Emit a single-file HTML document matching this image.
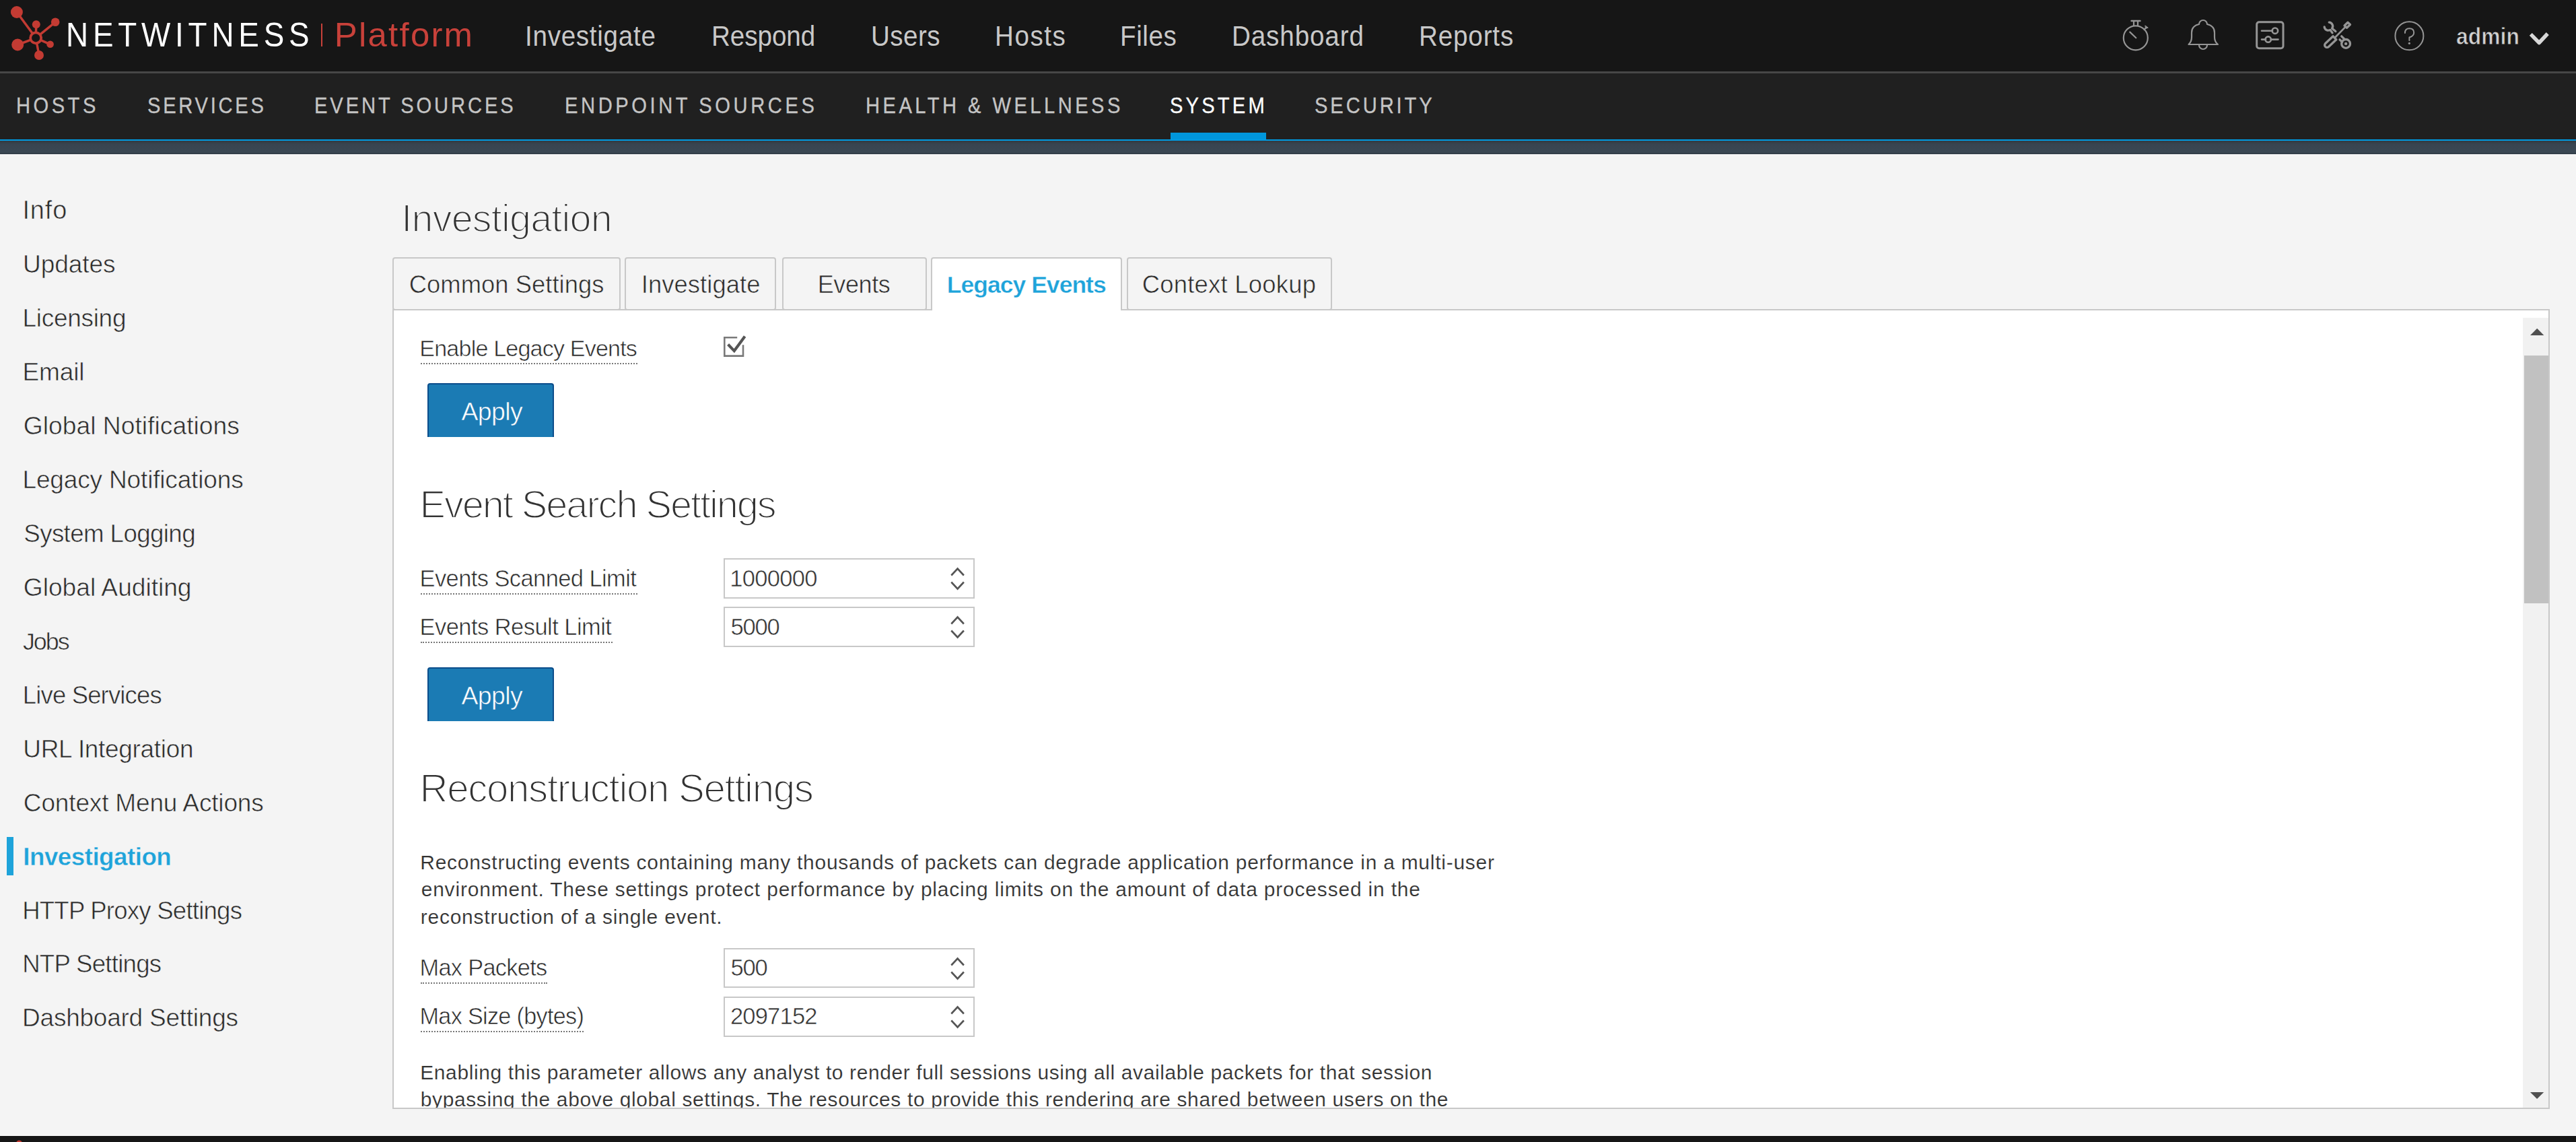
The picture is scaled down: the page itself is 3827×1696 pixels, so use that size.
<!DOCTYPE html>
<html><head><meta charset="utf-8"><title>NetWitness Platform - Investigation</title>
<style>
html,body{margin:0;padding:0;width:3827px;height:1696px;overflow:hidden;background:#f4f4f4;}
body{position:relative;font-family:"Liberation Sans",sans-serif;}
.t{position:absolute;white-space:nowrap;}
.r{position:absolute;}
</style></head><body>
<div class="r" style="left:0px;top:0px;width:3827.00px;height:106.00px;background:#161616"></div>
<div class="r" style="left:0px;top:106px;width:3827.00px;height:3.00px;background:#474747"></div>
<div class="r" style="left:0px;top:109px;width:3827.00px;height:98.00px;background:#202020"></div>
<div class="r" style="left:0px;top:207px;width:3827.00px;height:2.00px;background:#009be3"></div>
<div class="r" style="left:0px;top:209px;width:3827.00px;height:20.00px;background:linear-gradient(#323940,#384450 25%,#3a4753 85%,#303b45)"></div>
<div class="r" style="left:0px;top:229px;width:3827.00px;height:1.00px;background:#fbfbfb"></div>
<div class="r" style="left:0px;top:1686px;width:3827.00px;height:1.00px;background:#ffffff"></div>
<div class="r" style="left:0px;top:1687px;width:3827.00px;height:9.00px;background:#161616"></div>
<svg class="r" style="left:0;top:0" width="100" height="100" viewBox="0 0 100 100">
<g stroke="#c33b33" stroke-width="3.5" fill="none">
<line x1="24.9" y1="18" x2="53.2" y2="56.3"/>
<line x1="82.2" y1="32.8" x2="53.2" y2="56.3"/>
<line x1="53.8" y1="36.3" x2="53.2" y2="56.3"/>
<line x1="26.2" y1="66.5" x2="53.2" y2="56.3"/>
<line x1="74.6" y1="65.8" x2="53.2" y2="56.3"/>
<line x1="58" y1="82" x2="53.2" y2="56.3"/>
</g>
<circle cx="53.2" cy="56.3" r="8" fill="#161616" stroke="#c33b33" stroke-width="3.8"/>
<g fill="#c33b33">
<circle cx="24.9" cy="18" r="9"/>
<circle cx="53.8" cy="36.3" r="6"/>
<circle cx="82.2" cy="32.8" r="6.3"/>
<circle cx="26.2" cy="66.5" r="9"/>
<circle cx="74.6" cy="65.8" r="5.3"/>
<circle cx="58" cy="82" r="7"/>
</g></svg>
<svg class="r" style="left:0;top:1687px" width="60" height="9"><circle cx="28.5" cy="11" r="4.5" fill="#c33b33"/></svg>
<div class="t" style="left:98.32px;top:27.00px;font-size:50.87px;line-height:50.87px;letter-spacing:7.586px;color:#ffffff;transform:scaleX(0.9);transform-origin:0 0;">NETWITNESS</div>
<div class="r" style="left:477px;top:35px;width:2.00px;height:34.00px;background:#c8413a"></div>
<div class="t" style="left:496.83px;top:27.00px;font-size:50.87px;line-height:50.87px;letter-spacing:2.258px;color:#c8413a;">Platform</div>
<div class="t" style="left:780.49px;top:32.00px;font-size:42.88px;line-height:42.88px;letter-spacing:0.805px;color:#c8c8c8;transform:scaleX(0.9);transform-origin:0 0;">Investigate</div>
<div class="t" style="left:1056.99px;top:32.00px;font-size:42.88px;line-height:42.88px;letter-spacing:-0.054px;color:#c8c8c8;transform:scaleX(0.9);transform-origin:0 0;">Respond</div>
<div class="t" style="left:1293.59px;top:32.00px;font-size:42.88px;line-height:42.88px;letter-spacing:0.513px;color:#c8c8c8;transform:scaleX(0.9);transform-origin:0 0;">Users</div>
<div class="t" style="left:1477.99px;top:32.00px;font-size:42.88px;line-height:42.88px;letter-spacing:1.744px;color:#c8c8c8;transform:scaleX(0.9);transform-origin:0 0;">Hosts</div>
<div class="t" style="left:1663.99px;top:32.00px;font-size:42.88px;line-height:42.88px;letter-spacing:0.651px;color:#c8c8c8;transform:scaleX(0.9);transform-origin:0 0;">Files</div>
<div class="t" style="left:1829.99px;top:32.00px;font-size:42.88px;line-height:42.88px;letter-spacing:0.985px;color:#c8c8c8;transform:scaleX(0.9);transform-origin:0 0;">Dashboard</div>
<div class="t" style="left:2107.99px;top:32.00px;font-size:42.88px;line-height:42.88px;letter-spacing:0.944px;color:#c8c8c8;transform:scaleX(0.9);transform-origin:0 0;">Reports</div>
<div class="t" style="left:3648.50px;top:36.00px;font-size:35.25px;line-height:35.25px;letter-spacing:0.110px;color:#d0d0d0;font-weight:bold;-webkit-text-stroke:0.8px #161616;transform:scaleX(0.9);transform-origin:0 0;">admin</div>
<div class="t" style="left:24.12px;top:140.00px;font-size:33.14px;line-height:33.14px;letter-spacing:5.097px;color:#c4c4c4;-webkit-text-stroke:0.35px #c4c4c4;transform:scaleX(0.88);transform-origin:0 0;">HOSTS</div>
<div class="t" style="left:218.99px;top:140.00px;font-size:33.14px;line-height:33.14px;letter-spacing:4.218px;color:#c4c4c4;-webkit-text-stroke:0.35px #c4c4c4;transform:scaleX(0.88);transform-origin:0 0;">SERVICES</div>
<div class="t" style="left:467.32px;top:140.00px;font-size:33.14px;line-height:33.14px;letter-spacing:4.427px;color:#c4c4c4;-webkit-text-stroke:0.35px #c4c4c4;transform:scaleX(0.88);transform-origin:0 0;">EVENT SOURCES</div>
<div class="t" style="left:839.22px;top:140.00px;font-size:33.14px;line-height:33.14px;letter-spacing:5.189px;color:#c4c4c4;-webkit-text-stroke:0.35px #c4c4c4;transform:scaleX(0.88);transform-origin:0 0;">ENDPOINT SOURCES</div>
<div class="t" style="left:1285.72px;top:140.00px;font-size:33.14px;line-height:33.14px;letter-spacing:5.052px;color:#c4c4c4;-webkit-text-stroke:0.35px #c4c4c4;transform:scaleX(0.88);transform-origin:0 0;">HEALTH &amp; WELLNESS</div>
<div class="t" style="left:1738.39px;top:140.00px;font-size:33.14px;line-height:33.14px;letter-spacing:4.742px;color:#ffffff;-webkit-text-stroke:0.35px #ffffff;transform:scaleX(0.88);transform-origin:0 0;">SYSTEM</div>
<div class="t" style="left:1953.09px;top:140.00px;font-size:33.14px;line-height:33.14px;letter-spacing:4.444px;color:#c4c4c4;-webkit-text-stroke:0.35px #c4c4c4;transform:scaleX(0.88);transform-origin:0 0;">SECURITY</div>
<div class="r" style="left:1738.8px;top:197px;width:142.20px;height:10.00px;background:#0096dc"></div>
<svg class="r" style="left:3140px;top:20px" width="680" height="70" viewBox="3140 20 680 70" fill="none" stroke="#959595" stroke-width="2.2" stroke-linecap="round" stroke-linejoin="round">
<circle cx="3172.8" cy="56.3" r="18"/>
<line x1="3166.5" y1="31" x2="3179.5" y2="31" stroke-width="2.4"/>
<line x1="3170" y1="32" x2="3170" y2="38"/><line x1="3176" y1="32" x2="3176" y2="38"/>
<line x1="3164.3" y1="47.6" x2="3173.3" y2="56.3"/>
<line x1="3185.5" y1="44" x2="3188.5" y2="41"/><polygon points="3187.2,38.1 3191.3,41.2 3187.9,42.3" fill="#959595" stroke-width="1"/>
<path d="M3251.5 66 H3295 Q3290 62 3290 55 V48.5 Q3290 38.5 3279 36 A6 6 0 0 0 3267 36 Q3256 38.5 3256 48.5 V55 Q3256 62 3251.5 66 Z"/>
<path d="M3267 67 A5.9 5.9 0 0 0 3279 67"/>
<rect x="3352.7" y="32.7" width="39.3" height="39" rx="3.5" stroke-width="3"/>
<line x1="3360" y1="45.7" x2="3376" y2="45.7" stroke-width="2.6"/>
<circle cx="3379.9" cy="45.7" r="4.2" stroke-width="2.6"/>
<line x1="3360" y1="58.6" x2="3366" y2="58.6" stroke-width="2.6"/>
<line x1="3373.8" y1="58.6" x2="3384.5" y2="58.6" stroke-width="2.6"/>
<circle cx="3369.7" cy="58.6" r="4.2" stroke-width="2.6"/>
<g stroke-width="3.3">
<path d="M3466.1 53.8 L3470.9 58.8 L3459.5 69.5 A3.45 3.45 0 0 1 3454.7 64.5 Z"/>
<path d="M3483 38 L3488 33.3 L3491.5 36.5 L3486.5 41.2 Z"/>
<path d="M3460.2 33.2 A5.8 5.8 0 0 1 3464.6 42.3 L3469.8 46.6"/>
<path d="M3453.2 39.8 A5.8 5.8 0 0 0 3461.8 44.4 L3465 48.8"/>
<line x1="3476" y1="58.8" x2="3479.6" y2="62.4"/>
<line x1="3478.7" y1="53.8" x2="3482.8" y2="57.9"/>
<circle cx="3485.1" cy="64.9" r="6.4"/>
</g>
<line x1="3468.5" y1="56.3" x2="3484.75" y2="39.6" stroke-width="2.7"/>
<circle cx="3485.1" cy="64.9" r="2.2" fill="#959595" stroke="none"/>
<circle cx="3579.4" cy="53.3" r="21" stroke-width="2"/>
<path d="M3572.9 49 Q3572.9 42.2 3579.4 42.2 Q3586.2 42.2 3586.2 48.5 Q3586.2 53.5 3579.4 55.5 V60" stroke-width="2"/>
<circle cx="3579.4" cy="64.3" r="1.6" fill="#959595" stroke="none"/>
<polyline points="3759.8,50.8 3772.2,63.5 3784.8,50" stroke="#d8d8d8" stroke-width="5.5" stroke-linecap="butt"/>
</svg>
<div class="t" style="left:33.43px;top:294.00px;font-size:37.95px;line-height:37.95px;letter-spacing:0.899px;color:#2b2b2b;-webkit-text-stroke:0.6px #f4f4f4;">Info</div>
<div class="t" style="left:34.08px;top:374.00px;font-size:37.11px;line-height:37.11px;letter-spacing:-0.140px;color:#2b2b2b;-webkit-text-stroke:0.6px #f4f4f4;">Updates</div>
<div class="t" style="left:33.51px;top:455.00px;font-size:36.97px;line-height:36.97px;letter-spacing:-0.281px;color:#2b2b2b;-webkit-text-stroke:0.6px #f4f4f4;">Licensing</div>
<div class="t" style="left:33.50px;top:534.00px;font-size:37.07px;line-height:37.07px;letter-spacing:-0.189px;color:#2b2b2b;-webkit-text-stroke:0.6px #f4f4f4;">Email</div>
<div class="t" style="left:34.65px;top:614.00px;font-size:37.24px;line-height:37.24px;letter-spacing:0.027px;color:#2b2b2b;-webkit-text-stroke:0.6px #f4f4f4;">Global Notifications</div>
<div class="t" style="left:33.51px;top:694.00px;font-size:37.05px;line-height:37.05px;letter-spacing:-0.178px;color:#2b2b2b;-webkit-text-stroke:0.6px #f4f4f4;">Legacy Notifications</div>
<div class="t" style="left:35.25px;top:775.00px;font-size:36.73px;line-height:36.73px;letter-spacing:-0.612px;color:#2b2b2b;-webkit-text-stroke:0.6px #f4f4f4;">System Logging</div>
<div class="t" style="left:34.86px;top:854.00px;font-size:37.18px;line-height:37.18px;letter-spacing:-0.031px;color:#2b2b2b;-webkit-text-stroke:0.6px #f4f4f4;">Global Auditing</div>
<div class="t" style="left:33.94px;top:935.00px;font-size:35.92px;line-height:35.92px;letter-spacing:-2.066px;color:#2b2b2b;-webkit-text-stroke:0.6px #f4f4f4;">Jobs</div>
<div class="t" style="left:33.75px;top:1015.00px;font-size:36.48px;line-height:36.48px;letter-spacing:-0.829px;color:#2b2b2b;-webkit-text-stroke:0.6px #f4f4f4;">Live Services</div>
<div class="t" style="left:34.29px;top:1095.00px;font-size:36.95px;line-height:36.95px;letter-spacing:-0.295px;color:#2b2b2b;-webkit-text-stroke:0.6px #f4f4f4;">URL Integration</div>
<div class="t" style="left:34.86px;top:1174.00px;font-size:37.05px;line-height:37.05px;letter-spacing:-0.184px;color:#2b2b2b;-webkit-text-stroke:0.6px #f4f4f4;">Context Menu Actions</div>
<div class="t" style="left:34.30px;top:1255.00px;font-size:36.77px;line-height:36.77px;letter-spacing:-0.523px;color:#1ea3da;font-weight:bold;-webkit-text-stroke:0.4px #f4f4f4;">Investigation</div>
<div class="t" style="left:33.14px;top:1335.00px;font-size:36.57px;line-height:36.57px;letter-spacing:-0.771px;color:#2b2b2b;-webkit-text-stroke:0.6px #f4f4f4;">HTTP Proxy Settings</div>
<div class="t" style="left:33.14px;top:1414.00px;font-size:36.62px;line-height:36.62px;letter-spacing:-0.728px;color:#2b2b2b;-webkit-text-stroke:0.6px #f4f4f4;">NTP Settings</div>
<div class="t" style="left:33.11px;top:1493.00px;font-size:37.01px;line-height:37.01px;letter-spacing:-0.241px;color:#2b2b2b;-webkit-text-stroke:0.6px #f4f4f4;">Dashboard Settings</div>
<div class="r" style="left:10px;top:1243px;width:10.00px;height:57.00px;background:#1ea3da"></div>
<div class="t" style="left:596.31px;top:296.00px;font-size:57.43px;line-height:57.43px;letter-spacing:-0.754px;color:#333333;-webkit-text-stroke:2px #f4f4f4;">Investigation</div>
<div class="r" style="left:583.3px;top:459px;width:3204.70px;height:1187.60px;box-sizing:border-box;border:2px solid #c8c8c8;background:#fff"></div>
<div class="r" style="left:583.3px;top:382px;width:338.40px;height:79.40px;box-sizing:border-box;border:2px solid #c8c8c8;border-radius:4px;background:#f4f4f4"></div>
<div class="t" style="left:607.80px;top:405.00px;font-size:36.37px;line-height:36.37px;letter-spacing:0.047px;color:#2b2b2b;-webkit-text-stroke:0.6px #f4f4f4;">Common Settings</div>
<div class="r" style="left:928.1px;top:382px;width:224.90px;height:79.40px;box-sizing:border-box;border:2px solid #c8c8c8;border-radius:4px;background:#f4f4f4"></div>
<div class="t" style="left:952.76px;top:405.00px;font-size:36.40px;line-height:36.40px;letter-spacing:0.068px;color:#2b2b2b;-webkit-text-stroke:0.6px #f4f4f4;">Investigate</div>
<div class="r" style="left:1161.5px;top:382px;width:215.50px;height:79.40px;box-sizing:border-box;border:2px solid #c8c8c8;border-radius:4px;background:#f4f4f4"></div>
<div class="t" style="left:1214.79px;top:405.00px;font-size:36.02px;line-height:36.02px;letter-spacing:-0.436px;color:#2b2b2b;-webkit-text-stroke:0.6px #f4f4f4;">Events</div>
<div class="r" style="left:1383.4px;top:382px;width:283.60px;height:79.20px;box-sizing:border-box;border:2px solid #c8c8c8;border-bottom:none;border-radius:4px 4px 0 0;background:#fff"></div>
<div class="t" style="left:1406.78px;top:406.00px;font-size:35.58px;line-height:35.58px;letter-spacing:-1.017px;color:#1ea3da;font-weight:bold;-webkit-text-stroke:0.4px #fff;">Legacy Events</div>
<div class="r" style="left:1673.7px;top:382px;width:305.50px;height:79.40px;box-sizing:border-box;border:2px solid #c8c8c8;border-radius:4px;background:#f4f4f4"></div>
<div class="t" style="left:1696.69px;top:405.00px;font-size:36.50px;line-height:36.50px;letter-spacing:0.201px;color:#2b2b2b;-webkit-text-stroke:0.6px #f4f4f4;">Context Lookup</div>
<div class="r" style="left:3748px;top:472px;width:38.00px;height:1173.00px;background:#f1f1f1"></div>
<div class="r" style="left:3750px;top:528px;width:36.00px;height:368.30px;background:#c1c1c1"></div>
<svg class="r" style="left:3748px;top:472px" width="38" height="1173" viewBox="3748 472 38 1173"><polygon points="3759,498 3779.4,498 3769.2,487.8" fill="#505050"/><polygon points="3759,1622 3779.2,1622 3769.1,1632" fill="#505050"/></svg>
<div class="r" style="left:585px;top:461px;width:3163px;height:1184px;overflow:hidden">
<div class="t" style="left:38.34px;top:39.00px;font-size:34.06px;line-height:34.06px;letter-spacing:-0.804px;color:#2b2b2b;-webkit-text-stroke:0.6px #fff;">Enable Legacy Events</div>
<div class="r" style="left:40px;top:78px;width:321.90px;height:2.00px;border-top:2px dotted #777;height:0"></div>
<svg class="r" style="left:485px;top:33px" width="42" height="42" viewBox="1070 494 42 42" fill="none">
<path d="M1095.2 501.3 H1076.3 V528.6 H1104 V512.3" stroke="#7a7a7a" stroke-width="2.6"/>
<polyline points="1081.6,511.5 1090.8,521.1 1106.6,499.6" stroke="#555" stroke-width="4.2"/>
</svg>
<div class="r" style="left:50px;top:108px;width:188.00px;height:80.00px;box-sizing:border-box;background:#1b7bb4;border:2px solid #0b4d8b;border-bottom:none;border-radius:4px 4px 0 0"></div>
<div class="t" style="left:100.40px;top:132.00px;font-size:37.42px;line-height:37.42px;letter-spacing:-0.548px;color:#ffffff;-webkit-text-stroke:0.6px #1b7bb4;">Apply</div>
<div class="t" style="left:38.49px;top:260.00px;font-size:57.78px;line-height:57.78px;letter-spacing:-2.069px;color:#333333;-webkit-text-stroke:2px #fff;">Event Search Settings</div>
<div class="t" style="left:38.51px;top:381.00px;font-size:34.47px;line-height:34.47px;letter-spacing:-0.578px;color:#2b2b2b;-webkit-text-stroke:0.6px #fff;">Events Scanned Limit</div>
<div class="r" style="left:40.200000000000045px;top:419.5px;width:321.80px;height:2.00px;border-top:2px dotted #777;height:0"></div>
<div class="r" style="left:490px;top:368px;width:373.00px;height:59.60px;box-sizing:border-box;border:2px solid #c8c8c8;background:#fff"></div>
<div class="t" style="left:499.34px;top:381.00px;font-size:34.59px;line-height:34.59px;letter-spacing:-0.742px;color:#333333;-webkit-text-stroke:0.5px #fff;">1000000</div>
<svg class="r" style="left:820px;top:368px" width="36" height="60" viewBox="0 0 36 60" fill="none" stroke="#555" stroke-width="2.6"><polyline points="8.3,25.5 17.6,15.5 26.9,25.5"/><polyline points="8.3,35.5 17.6,45.5 26.9,35.5"/></svg>
<div class="t" style="left:38.51px;top:453.00px;font-size:34.48px;line-height:34.48px;letter-spacing:-0.531px;color:#2b2b2b;-webkit-text-stroke:0.6px #fff;">Events Result Limit</div>
<div class="r" style="left:40.200000000000045px;top:492px;width:285.00px;height:2.00px;border-top:2px dotted #777;height:0"></div>
<div class="r" style="left:490px;top:440px;width:373.00px;height:59.60px;box-sizing:border-box;border:2px solid #c8c8c8;background:#fff"></div>
<div class="t" style="left:500.42px;top:453.00px;font-size:34.59px;line-height:34.59px;letter-spacing:-1.238px;color:#333333;-webkit-text-stroke:0.5px #fff;">5000</div>
<svg class="r" style="left:820px;top:440px" width="36" height="60" viewBox="0 0 36 60" fill="none" stroke="#555" stroke-width="2.6"><polyline points="8.3,25.5 17.6,15.5 26.9,25.5"/><polyline points="8.3,35.5 17.6,45.5 26.9,35.5"/></svg>
<div class="r" style="left:50px;top:530.2px;width:188.00px;height:80.00px;box-sizing:border-box;background:#1b7bb4;border:2px solid #0b4d8b;border-bottom:none;border-radius:4px 4px 0 0"></div>
<div class="t" style="left:100.40px;top:554.00px;font-size:37.42px;line-height:37.42px;letter-spacing:-0.548px;color:#ffffff;-webkit-text-stroke:0.6px #1b7bb4;">Apply</div>
<div class="t" style="left:38.44px;top:681.00px;font-size:58.34px;line-height:58.34px;letter-spacing:-1.386px;color:#333333;-webkit-text-stroke:2px #fff;">Reconstruction Settings</div>
<div class="t" style="left:39.26px;top:805.00px;font-size:29.94px;line-height:29.94px;letter-spacing:0.761px;color:#333333;-webkit-text-stroke:0.15px #fff;">Reconstructing events containing many thousands of packets can degrade application performance in a multi-user</div>
<div class="t" style="left:40.66px;top:845.00px;font-size:29.94px;line-height:29.94px;letter-spacing:0.828px;color:#333333;-webkit-text-stroke:0.15px #fff;">environment. These settings protect performance by placing limits on the amount of data processed in the</div>
<div class="t" style="left:39.73px;top:886.00px;font-size:29.94px;line-height:29.94px;letter-spacing:0.788px;color:#333333;-webkit-text-stroke:0.15px #fff;">reconstruction of a single event.</div>
<div class="t" style="left:38.52px;top:959.00px;font-size:34.36px;line-height:34.36px;letter-spacing:-0.702px;color:#2b2b2b;-webkit-text-stroke:0.6px #fff;">Max Packets</div>
<div class="r" style="left:40.200000000000045px;top:997.9000000000001px;width:187.90px;height:2.00px;border-top:2px dotted #777;height:0"></div>
<div class="r" style="left:490px;top:946.5px;width:373.00px;height:59.60px;box-sizing:border-box;border:2px solid #c8c8c8;background:#fff"></div>
<div class="t" style="left:500.42px;top:959.00px;font-size:34.59px;line-height:34.59px;letter-spacing:-1.237px;color:#333333;-webkit-text-stroke:0.5px #fff;">500</div>
<svg class="r" style="left:820px;top:946.5px" width="36" height="60" viewBox="0 0 36 60" fill="none" stroke="#555" stroke-width="2.6"><polyline points="8.3,25.5 17.6,15.5 26.9,25.5"/><polyline points="8.3,35.5 17.6,45.5 26.9,35.5"/></svg>
<div class="t" style="left:38.53px;top:1031.00px;font-size:34.21px;line-height:34.21px;letter-spacing:-0.685px;color:#2b2b2b;-webkit-text-stroke:0.6px #fff;">Max Size (bytes)</div>
<div class="r" style="left:40.200000000000045px;top:1070px;width:242.00px;height:2.00px;border-top:2px dotted #777;height:0"></div>
<div class="r" style="left:490px;top:1019px;width:373.00px;height:59.60px;box-sizing:border-box;border:2px solid #c8c8c8;background:#fff"></div>
<div class="t" style="left:499.88px;top:1031.00px;font-size:34.59px;line-height:34.59px;letter-spacing:-0.825px;color:#333333;-webkit-text-stroke:0.5px #fff;">2097152</div>
<svg class="r" style="left:820px;top:1019px" width="36" height="60" viewBox="0 0 36 60" fill="none" stroke="#555" stroke-width="2.6"><polyline points="8.3,25.5 17.6,15.5 26.9,25.5"/><polyline points="8.3,35.5 17.6,45.5 26.9,35.5"/></svg>
<div class="t" style="left:39.26px;top:1117.00px;font-size:29.94px;line-height:29.94px;letter-spacing:0.625px;color:#333333;-webkit-text-stroke:0.15px #fff;">Enabling this parameter allows any analyst to render full sessions using all available packets for that session</div>
<div class="t" style="left:39.73px;top:1157.00px;font-size:29.94px;line-height:29.94px;letter-spacing:0.649px;color:#333333;-webkit-text-stroke:0.15px #fff;">bypassing the above global settings. The resources to provide this rendering are shared between users on the</div>
</div>
</body></html>
